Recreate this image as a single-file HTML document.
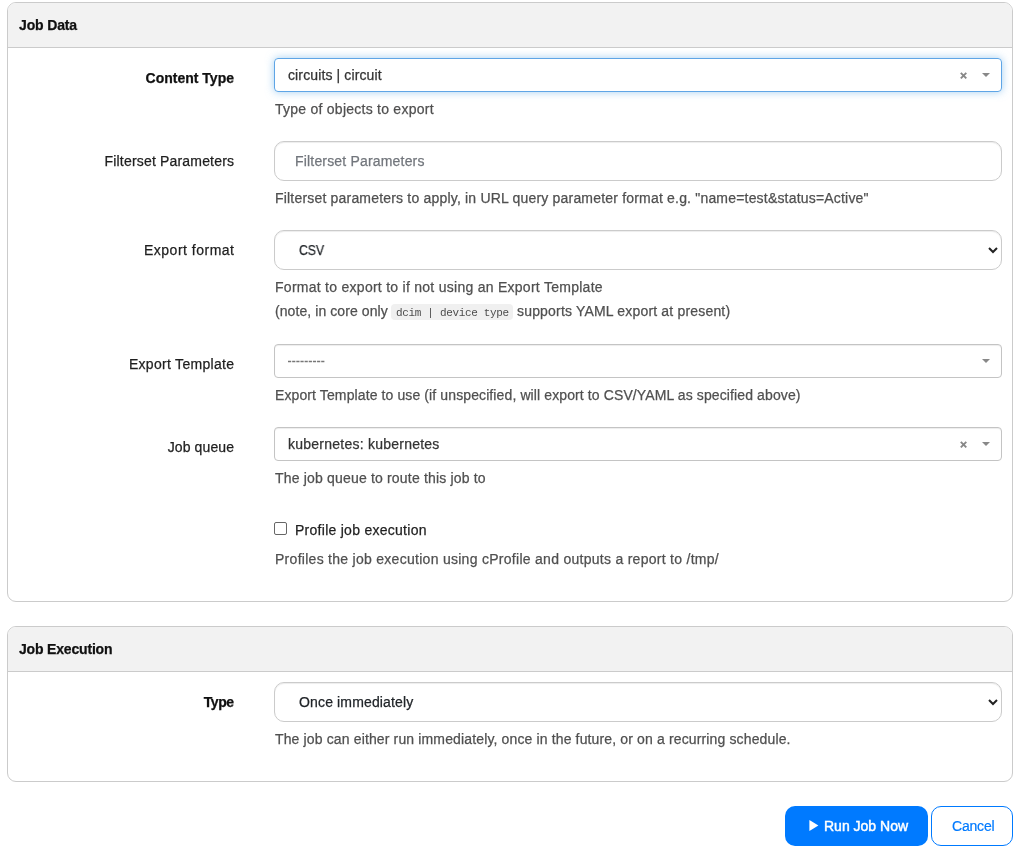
<!DOCTYPE html>
<html>
<head>
<meta charset="utf-8">
<style>
html,body{margin:0;padding:0;background:#fff;width:1024px;height:852px;overflow:hidden;position:relative;}
body{font-family:"Liberation Sans",sans-serif;font-size:14px;color:#212529;}
.a{position:absolute;box-sizing:border-box;}
.t{position:absolute;white-space:pre;font-size:14px;line-height:16px;will-change:transform;-webkit-text-stroke:0.25px currentColor;}
.panel{position:absolute;box-sizing:border-box;border:1px solid #cbcbcb;border-radius:9px;background:#fff;overflow:hidden;}
.ph{position:absolute;left:0;top:0;right:0;background:#f2f2f2;border-bottom:1px solid #cbcbcb;box-sizing:border-box;}
.lbl{color:#1f1f1f;text-align:right;}
.help{color:#505050;}
.box4{border:1px solid #c4c4c4;border-radius:4px;background:#fff;box-shadow:inset 0 1px 1px rgba(0,0,0,.075);}
.box8{border:1px solid #cbcbcb;border-radius:10px;background:#fff;box-shadow:inset 0 1px 1px rgba(0,0,0,.075);}
</style>
</head>
<body>

<!-- Panel 1 -->
<div class="panel" style="left:7px;top:2px;width:1006px;height:600px;">
  <div class="ph" style="height:45px;"></div>
</div>
<div class="t" style="left:19px;top:17px;font-weight:bold;color:#111;letter-spacing:-0.14px;">Job Data</div>

<!-- Content Type -->
<div class="t lbl" style="left:0;width:234px;top:70px;font-weight:bold;color:#111;">Content Type</div>
<div class="a" style="left:274px;top:58px;width:728px;height:34px;border:1px solid #5ea5e6;border-radius:4px;box-shadow:0 0 8px rgba(102,175,233,.6);"></div>
<div class="t" style="left:288px;top:67px;color:#333;letter-spacing:0.12px;">circuits | circuit</div>
<svg class="a" style="left:959px;top:71px;" width="10" height="10" viewBox="0 0 10 10"><path d="M1.8 1.8L7.3 7.3M7.3 1.8L1.8 7.3" stroke="#888" stroke-width="1.9" fill="none"/></svg>
<svg class="a" style="left:981px;top:72px;" width="10" height="6" viewBox="0 0 10 6"><path d="M1 1h8L5 5z" fill="#888"/></svg>
<div class="t help" style="left:275px;top:101px;letter-spacing:0.25px;">Type of objects to export</div>

<!-- Filterset Parameters -->
<div class="t lbl" style="left:0;width:234.2px;top:153px;letter-spacing:0.18px;">Filterset Parameters</div>
<div class="a box8" style="left:274px;top:141px;width:728px;height:40px;"></div>
<div class="t" style="left:295px;top:153px;color:#72767c;letter-spacing:0.18px;">Filterset Parameters</div>
<div class="t help" style="left:275px;top:190px;letter-spacing:0.19px;">Filterset parameters to apply, in URL query parameter format e.g. "name=test&amp;status=Active"</div>

<!-- Export format -->
<div class="t lbl" style="left:0;width:234.5px;top:242px;letter-spacing:0.5px;">Export format</div>
<div class="a box8" style="left:274px;top:230px;width:728px;height:40px;"></div>
<div class="t" style="left:299px;top:242px;color:#212529;transform:scaleX(0.87);transform-origin:0 0;">CSV</div>
<svg class="a" style="left:986px;top:244px;" width="14" height="12" viewBox="0 0 14 12"><path d="M3 4l4 4 4-4" fill="none" stroke="#222" stroke-width="2"/></svg>
<div class="t help" style="left:275px;top:279px;letter-spacing:0.27px;">Format to export to if not using an Export Template</div>
<div class="t help" style="left:275px;top:303px;letter-spacing:0.08px;">(note, in core only </div>
<div class="a" style="left:391px;top:304px;width:122px;height:16px;background:#f0f0f0;border-radius:4px;"></div>
<div class="t" style="left:396px;top:304.5px;font-family:'Liberation Mono',monospace;font-size:11px;letter-spacing:-0.33px;color:#4d4d4d;-webkit-text-stroke:0;">dcim | device type</div>
<div class="t help" style="left:517px;top:303px;letter-spacing:0.18px;">supports YAML export at present)</div>

<!-- Export Template -->
<div class="t lbl" style="left:0;width:234.3px;top:356px;letter-spacing:0.3px;">Export Template</div>
<div class="a box4" style="left:274px;top:344px;width:728px;height:34px;"></div>
<svg class="a" style="left:287px;top:358px;" width="40" height="7" viewBox="0 0 40 7"><path d="M1 3.5H38" stroke="#777" stroke-width="1.3" stroke-dasharray="3.2 0.95"/></svg>
<svg class="a" style="left:981px;top:358px;" width="10" height="6" viewBox="0 0 10 6"><path d="M1 1h8L5 5z" fill="#888"/></svg>
<div class="t help" style="left:275px;top:387px;letter-spacing:0.11px;">Export Template to use (if unspecified, will export to CSV/YAML as specified above)</div>

<!-- Job queue -->
<div class="t lbl" style="left:0;width:234.1px;top:439px;letter-spacing:0.11px;">Job queue</div>
<div class="a box4" style="left:274px;top:427px;width:728px;height:34px;"></div>
<div class="t" style="left:288px;top:436px;color:#333;letter-spacing:0.24px;">kubernetes: kubernetes</div>
<svg class="a" style="left:959px;top:440px;" width="10" height="10" viewBox="0 0 10 10"><path d="M1.8 1.8L7.3 7.3M7.3 1.8L1.8 7.3" stroke="#888" stroke-width="1.9" fill="none"/></svg>
<svg class="a" style="left:981px;top:441px;" width="10" height="6" viewBox="0 0 10 6"><path d="M1 1h8L5 5z" fill="#888"/></svg>
<div class="t help" style="left:275px;top:470px;letter-spacing:0.18px;">The job queue to route this job to</div>

<!-- Profile -->
<div class="a" style="left:274px;top:522px;width:13px;height:13px;border:1px solid #666;border-radius:2px;"></div>
<div class="t" style="left:295px;top:522px;color:#1f1f1f;letter-spacing:0.27px;">Profile job execution</div>
<div class="t help" style="left:275px;top:551px;letter-spacing:0.28px;">Profiles the job execution using cProfile and outputs a report to /tmp/</div>

<!-- Panel 2 -->
<div class="panel" style="left:7px;top:626px;width:1006px;height:156px;">
  <div class="ph" style="height:45px;"></div>
</div>
<div class="t" style="left:19px;top:641px;font-weight:bold;color:#111;letter-spacing:-0.18px;">Job Execution</div>

<div class="t lbl" style="left:0;width:233.5px;top:694px;font-weight:bold;color:#111;letter-spacing:-0.5px;">Type</div>
<div class="a box8" style="left:274px;top:682px;width:728px;height:40px;"></div>
<div class="t" style="left:299px;top:694px;color:#212529;letter-spacing:0.15px;">Once immediately</div>
<svg class="a" style="left:986px;top:696px;" width="14" height="12" viewBox="0 0 14 12"><path d="M3 4l4 4 4-4" fill="none" stroke="#222" stroke-width="2"/></svg>
<div class="t help" style="left:275px;top:731px;letter-spacing:0.14px;">The job can either run immediately, once in the future, or on a recurring schedule.</div>

<!-- Buttons -->
<div class="a" style="left:785px;top:806px;width:143px;height:40px;background:#007aff;border-radius:10px;"></div>
<svg class="a" style="left:809px;top:819px;" width="10" height="13" viewBox="0 0 10 13"><path d="M0.4 0.9L9.4 6.5L0.4 12.1z" fill="#fff"/></svg>
<div class="t" style="left:824px;top:818px;color:#fff;-webkit-text-stroke:0.45px #fff;">Run Job Now</div>
<div class="a" style="left:931px;top:806px;width:82px;height:40px;border:1px solid #007aff;border-radius:10px;"></div>
<div class="t" style="left:952px;top:818px;color:#007aff;letter-spacing:-0.2px;-webkit-text-stroke:0.2px #007aff;">Cancel</div>

</body>
</html>
